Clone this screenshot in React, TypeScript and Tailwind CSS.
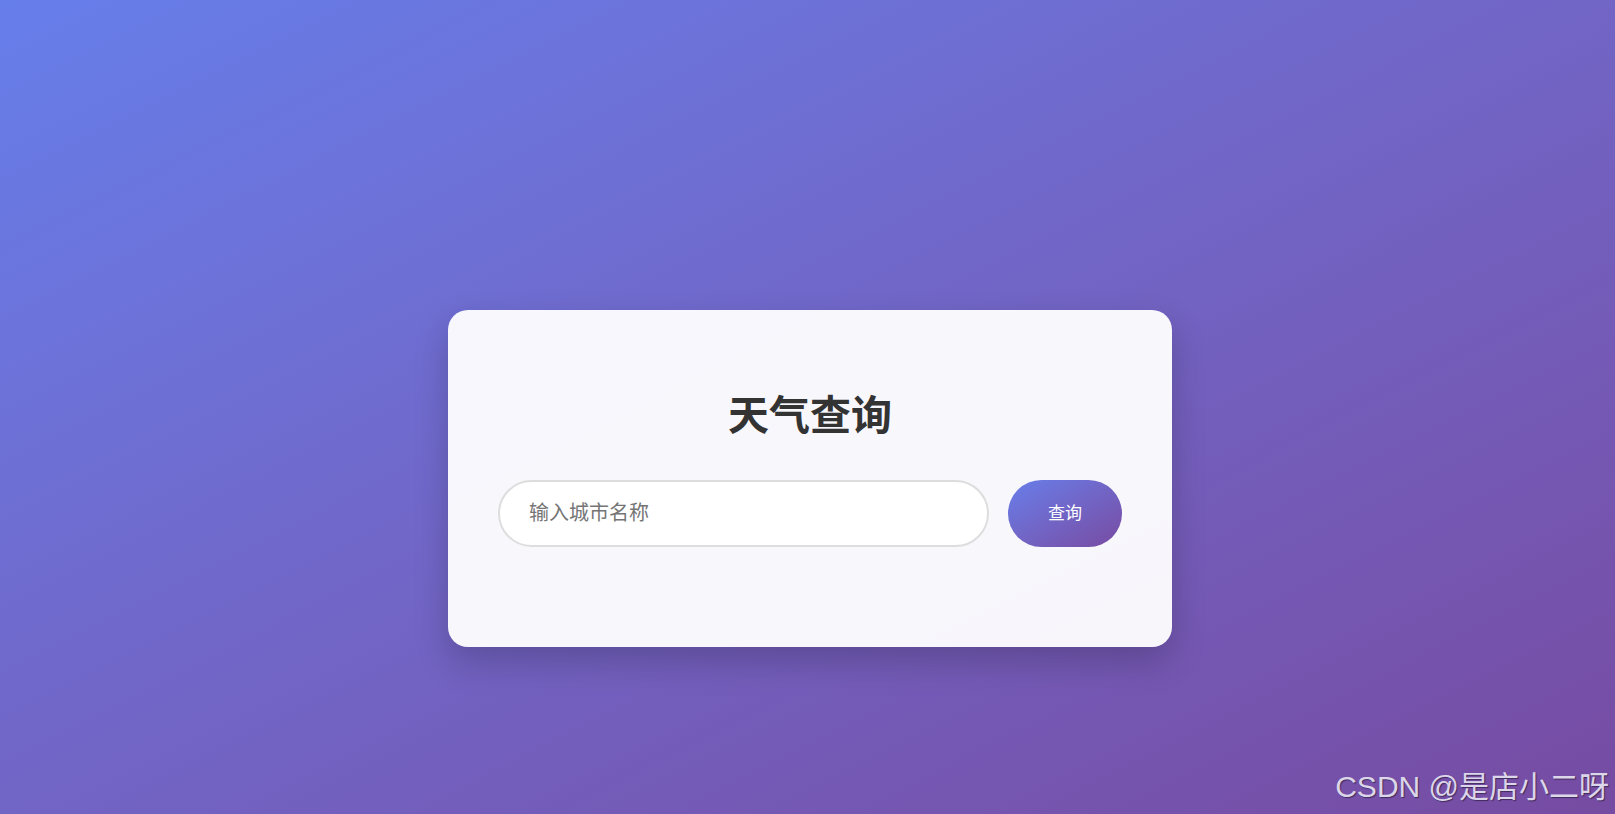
export default function App() {
  return (
    <div className="relative min-h-screen w-full bg-gradient-to-br from-[#667eea] to-[#764ba2] font-['Liberation_Sans','Noto_Sans_CJK_SC',sans-serif]">
      <div className="flex justify-center pt-[310px] pb-[167px] pl-[5px]">
        {/* Search card */}
        <div className="w-[724px] rounded-[20px] bg-white/95 px-[50px] pt-[50px] pb-[100px] shadow-[0_15px_35px_rgba(0,0,0,0.2)]">
          <h1 className="mt-[32px] mb-[40px] h-[48px] text-center text-[41px] leading-[48px] font-bold text-[#333]">
            天气查询
          </h1>
          <div className="flex gap-[19px]">
            <input
              type="text"
              placeholder="输入城市名称"
              className="h-[67px] flex-1 rounded-full border-2 border-[#ddd] bg-white px-[29px] text-[20px] text-[#333] outline-none placeholder:text-[#757575]"
            />
            <button className="h-[67px] w-[114px] rounded-full bg-gradient-to-br from-[#667eea] to-[#764ba2] text-[17px] text-white">
              查询
            </button>
          </div>
        </div>
      </div>

      {/* Watermark */}
      <div className="absolute right-[6px] bottom-[12px] text-[30px] leading-none text-[#dcd6ea] [text-shadow:1px_1px_1px_rgba(0,0,0,0.45)]">
        CSDN @是店小二呀
      </div>
    </div>
  )
}
